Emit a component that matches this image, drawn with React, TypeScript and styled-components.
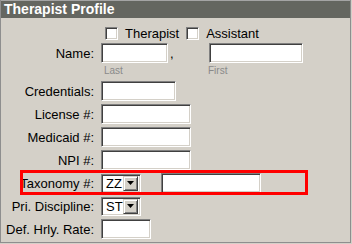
import React from "react";
import styled, { createGlobalStyle, css } from "styled-components";

const Global = createGlobalStyle`
  html, body { margin: 0; padding: 0; background: #d4d0c8; }
  body { font-family: "Liberation Sans", Arial, sans-serif; }
`;

const Panel = styled.div`
  width: 351px;
  height: 243px;
  box-sizing: border-box;
  border-left: 1px solid #8e8e8e;
  border-right: 1px solid #8e8e8e;
  border-bottom: 1px solid #8e8e8e;
  background: #d4d0c8;
  display: flex;
  flex-direction: column;
`;

const Header = styled.div`
  height: 17px;
  border-top: 1px solid #a4a4a4;
  background: #646660;
  color: #fff;
  font-weight: bold;
  font-size: 14px;
  line-height: 17px;
  padding-left: 3px;
`;

const Body = styled.div`
  display: flex;
  flex-direction: column;
  font-size: 13px;
  color: #000;
`;

const CheckRow = styled.div`
  display: flex;
  align-items: center;
  height: 14px;
  margin-top: 8px;
  padding-left: 104px;
`;

const Check = styled.span`
  width: 13px;
  height: 13px;
  box-sizing: border-box;
  background: #fff;
  border-top: 1px solid #808080;
  border-left: 1px solid #808080;
  border-bottom: 1px solid #fff;
  border-right: 1px solid #fff;
  box-shadow: inset 1px 1px #404040, inset -1px -1px #d4d0c8;
`;

const CheckText = styled.span`
  margin-left: 7px;
  margin-right: 7px;
`;

const Row = styled.div<{ $mt?: number; $highlight?: boolean }>`
  position: relative;
  display: flex;
  align-items: center;
  height: 20px;
  margin-top: ${(p) => p.$mt ?? 3}px;
  ${(p) =>
    p.$highlight &&
    css`
      &::after {
        content: "";
        position: absolute;
        left: 19px;
        top: -3px;
        width: 288px;
        height: 25px;
        box-sizing: border-box;
        border: 3px solid #ff0000;
        pointer-events: none;
      }
    `}
`;

const Label = styled.span`
  width: 93px;
  text-align: right;
  margin-right: 7px;
  white-space: nowrap;
`;

const Field = styled.span<{ $w: number }>`
  display: inline-block;
  width: ${(p) => p.$w}px;
  height: 20px;
  box-sizing: border-box;
  background: #fff;
  border-top: 1px solid #808080;
  border-left: 1px solid #808080;
  border-bottom: 1px solid #fff;
  border-right: 1px solid #fff;
  box-shadow: inset 1px 1px #404040, inset -1px -1px #d4d0c8;
`;

const Comma = styled.span`
  width: 41px;
  padding-left: 2px;
  box-sizing: border-box;
`;

const Hints = styled.div`
  display: flex;
  height: 18px;
  padding-left: 103px;
  padding-top: 2px;
  box-sizing: border-box;
  font-size: 10px;
  color: #8a8a8a;
`;

const Hint = styled.span<{ $w: number }>`
  width: ${(p) => p.$w}px;
`;

const Select = styled.span`
  display: inline-flex;
  align-items: center;
  width: 40px;
  height: 19px;
  box-sizing: border-box;
  background: #fff;
  border-top: 1px solid #808080;
  border-left: 1px solid #808080;
  border-bottom: 1px solid #fff;
  border-right: 1px solid #fff;
  box-shadow: inset 1px 1px #404040, inset -1px -1px #d4d0c8;
  padding: 2px;
`;

const SelectText = styled.span`
  flex: 1;
  padding-left: 2px;
  font-size: 13px;
  line-height: 15px;
`;

const DropBtn = styled.span`
  width: 15px;
  height: 15px;
  box-sizing: border-box;
  background: #d4d0c8;
  border-top: 1px solid #d4d0c8;
  border-left: 1px solid #d4d0c8;
  border-bottom: 1px solid #404040;
  border-right: 1px solid #404040;
  box-shadow: inset 1px 1px #fff, inset -1px -1px #808080;
  display: flex;
  align-items: center;
  justify-content: center;
`;

const Arrow = () => (
  <svg width="7" height="4" viewBox="0 0 7 4">
    <path d="M0 0H7L3.5 4Z" fill="#000" />
  </svg>
);

const Gap = styled.span<{ $w: number }>`
  width: ${(p) => p.$w}px;
`;

export default function App() {
  return (
    <>
      <Global />
      <Panel>
        <Header>Therapist Profile</Header>
        <Body>
          <CheckRow>
            <Check />
            <CheckText>Therapist</CheckText>
            <Check />
            <CheckText>Assistant</CheckText>
          </CheckRow>
          <Row $mt={3}>
            <Label>Name:</Label>
            <Field $w={67} />
            <Comma>,</Comma>
            <Field $w={94} />
          </Row>
          <Hints>
            <Hint $w={104}>Last</Hint>
            <Hint $w={40}>First</Hint>
          </Hints>
          <Row $mt={0}>
            <Label>Credentials:</Label>
            <Field $w={75} />
          </Row>
          <Row>
            <Label>License #:</Label>
            <Field $w={90} />
          </Row>
          <Row>
            <Label>Medicaid #:</Label>
            <Field $w={90} />
          </Row>
          <Row>
            <Label>NPI #:</Label>
            <Field $w={90} />
          </Row>
          <Row $highlight>
            <Label>Taxonomy #:</Label>
            <Select>
              <SelectText>ZZ</SelectText>
              <DropBtn>
                <Arrow />
              </DropBtn>
            </Select>
            <Gap $w={20} />
            <Field $w={100} />
          </Row>
          <Row>
            <Label>Pri. Discipline:</Label>
            <Select>
              <SelectText>ST</SelectText>
              <DropBtn>
                <Arrow />
              </DropBtn>
            </Select>
          </Row>
          <Row>
            <Label>Def. Hrly. Rate:</Label>
            <Field $w={50} />
          </Row>
        </Body>
      </Panel>
    </>
  );
}
